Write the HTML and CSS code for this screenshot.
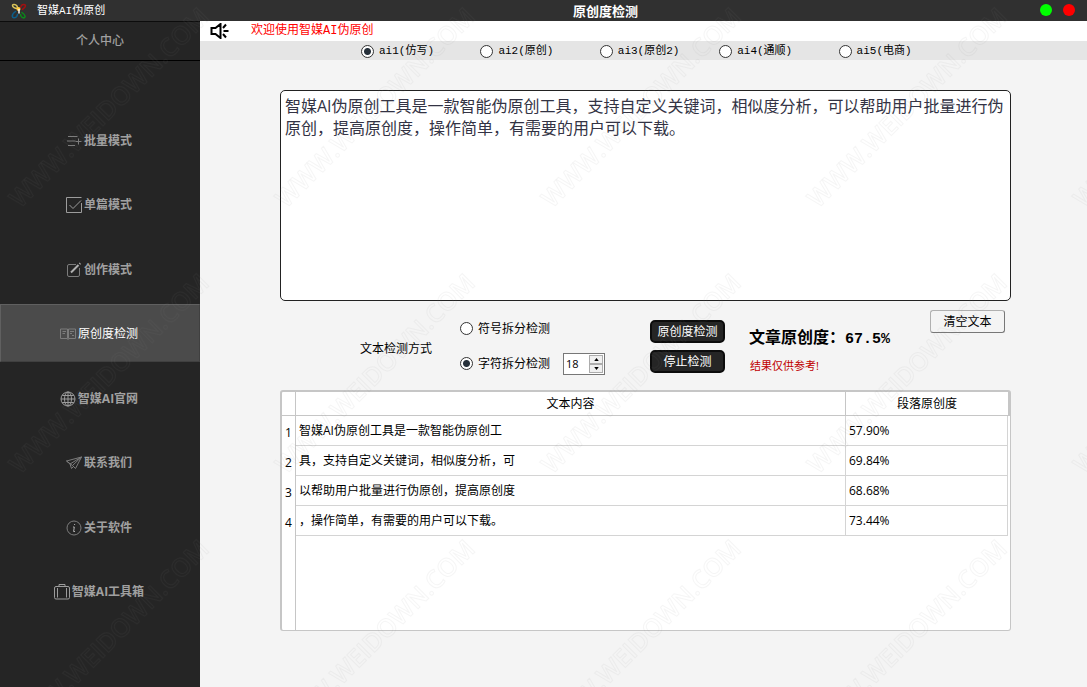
FILE: index.html
```html
<!DOCTYPE html>
<html lang="zh-CN">
<head>
<meta charset="utf-8">
<title>智媒AI伪原创</title>
<link rel="stylesheet" href="styles.css">
</head>
<body>
<div class="app">
  <header class="titlebar">
    <div class="brand">
      <svg class="logo" viewBox="0 0 16 16" fill="none" stroke-width="1.5" stroke-linecap="round" aria-hidden="true">
        <path d="M6 5.500C4 5.500 1.500 4 1.500 2.500s3-1.500 4.500.5l.5 1.500" stroke="#d9c45a"/>
        <path d="M9.500 4.500l1-2C11.500 1 14.500 1 14.500 2.800S12.500 5 11.500 6.500" stroke="#a01010"/>
        <path d="M11 9.500C12.500 10.500 14.500 12 14 13.800s-3 1.200-4-.8l-.5-1.500" stroke="#0a8a1a"/>
        <path d="M4.500 8.500C3 9.500 1 11 1.300 13.300s3.500 1.500 4.500 0L6.500 11.500" stroke="#0c5f8c"/>
        <circle cx="7.500" cy="6" r="2" fill="#ffc93c" stroke="none"/>
        <path d="M8 6.500v3.500" stroke="#f4f4f4"/>
      </svg>
      <span>智媒AI伪原创</span>
    </div>
    <h1 class="title">原创度检测</h1>
    <div class="window-buttons">
      <button type="button" class="dot dot-green" aria-label="最小化"></button>
      <button type="button" class="dot dot-red" aria-label="关闭"></button>
    </div>
  </header>

  <div class="body">
    <aside class="sidebar">
      <a class="profile" href="#">个人中心</a>
      <nav class="nav">
        <a class="nav-item" href="#">
          <svg class="icon" viewBox="0 0 16 16"><path d="M2 3.500h9.500M1 8h8.500M2 12.500h7M9.500 8.500h6M12.500 5.500v6"/></svg>批量模式</a>
        <a class="nav-item" href="#">
          <svg class="icon icon-bright" viewBox="0 0 16 16"><path d="M15.500 6v9.500H.5V.5h15M3.500 8l3.500 3.500 8-8"/></svg>单篇模式</a>
        <a class="nav-item" href="#">
          <svg class="icon" viewBox="0 0 16 16"><path d="M10 2.500H3a1.500 1.500 0 0 0-1.500 1.500v9A1.500 1.500 0 0 0 3 14.500h9a1.500 1.500 0 0 0 1.500-1.500V6"/><path class="pen" d="M5 10.500L12.500 3M13.500 2l.8-.8"/></svg>创作模式</a>
        <a class="nav-item nav-active" href="#" aria-current="page">
          <svg class="icon" viewBox="0 0 16 16"><path d="M.5 3h7v9.500h-7zM8.500 3h7v9.500h-7zM2.500 5.500H6M2.500 7.500H5M10 5.500h4M10 7.500h2M12 9.500h2M7.500 13.500h1"/></svg>原创度检测</a>
        <a class="nav-item" href="#">
          <svg class="icon icon-bright" viewBox="0 0 16 16"><path d="M8 1v14M1 8h14M2.200 4.500h11.600M2.200 11.500h11.600"/><circle cx="8" cy="8" r="7"/><ellipse cx="8" cy="8" rx="3.500" ry="7"/></svg>智媒AI官网</a>
        <a class="nav-item" href="#">
          <svg class="icon" viewBox="0 0 16 16"><path d="M.5 6L15.500 2l-6 11.500-3-3zM.5 6l3.500 3L15.500 2 6.500 10.500M4 9l1.500 4.500 2-2"/></svg>联系我们</a>
        <a class="nav-item" href="#">
          <svg class="icon" viewBox="0 0 16 16"><circle cx="8" cy="8" r="7"/><path class="letter" d="M8.600 4v1M7 7h1.300L7.600 11.500H9"/></svg>关于软件</a>
        <a class="nav-item" href="#">
          <svg class="icon icon-bright" viewBox="0 0 16 16"><rect x=".5" y="2.500" width="15" height="12.500" rx="1.500"/><path d="M5 2.500v-2h6v2M3.500 4v9.500M12.500 4v9.500"/></svg>智媒AI工具箱</a>
      </nav>
    </aside>

    <main class="main">
      <div class="notice">
        <svg class="speaker" viewBox="0 0 18 16" aria-hidden="true"><path d="M1 5h4l5-4v14l-5-4H1zM12.500 5l3-3.500M13 8h5M12.500 11l3 3.500"/></svg>
        <span>欢迎使用智媒AI伪原创</span>
      </div>
      <div class="modes" role="radiogroup" aria-label="模式">
        <label class="mode"><input class="radio" type="radio" name="mode" checked>ai1(仿写)</label>
        <label class="mode"><input class="radio" type="radio" name="mode">ai2(原创)</label>
        <label class="mode"><input class="radio" type="radio" name="mode">ai3(原创2)</label>
        <label class="mode"><input class="radio" type="radio" name="mode">ai4(通顺)</label>
        <label class="mode"><input class="radio" type="radio" name="mode">ai5(电商)</label>
      </div>

      <div class="content">
        <textarea class="editor" aria-label="文本" spellcheck="false">智媒AI伪原创工具是一款智能伪原创工具，支持自定义关键词，相似度分析，可以帮助用户批量进行伪原创，提高原创度，操作简单，有需要的用户可以下载。</textarea>

        <div class="controls">
          <span class="method-title" id="method">文本检测方式</span>
          <div class="methods" role="radiogroup" aria-labelledby="method">
            <label class="method"><input class="radio" type="radio" name="method">符号拆分检测</label>
            <div class="method-row">
              <label class="method"><input class="radio" type="radio" name="method" checked>字符拆分检测</label>
              <div class="spin">
                <input class="spin-input" type="number" value="18" aria-label="字符数">
                <div class="spin-buttons">
                  <button type="button" class="spin-button" aria-label="增加"><svg class="arrow" viewBox="0 0 6 4"><path d="M0 4l3-4 3 4z"/></svg></button>
                  <button type="button" class="spin-button" aria-label="减少"><svg class="arrow" viewBox="0 0 6 4"><path d="M0 0l3 4 3-4z"/></svg></button>
                </div>
              </div>
            </div>
          </div>
          <div class="actions">
            <button type="button" class="button button-dark">原创度检测</button>
            <button type="button" class="button button-dark">停止检测</button>
          </div>
          <div class="result">
            <strong class="score">文章原创度：<span class="score-value">67.5%</span></strong>
            <span class="hint">结果仅供参考!</span>
          </div>
          <button type="button" class="button button-clear">清空文本</button>
        </div>

        <div class="panel">
          <table class="table">
            <colgroup><col class="col-index"><col><col class="col-score"></colgroup>
            <thead>
              <tr><td class="corner"></td><th scope="col">文本内容</th><th scope="col">段落原创度</th></tr>
            </thead>
            <tbody>
              <tr><th scope="row">1</th><td>智媒AI伪原创工具是一款智能伪原创工</td><td>57.90%</td></tr>
              <tr><th scope="row">2</th><td>具，支持自定义关键词，相似度分析，可</td><td>69.84%</td></tr>
              <tr><th scope="row">3</th><td>以帮助用户批量进行伪原创，提高原创度</td><td>68.68%</td></tr>
              <tr><th scope="row">4</th><td>，操作简单，有需要的用户可以下载。</td><td>73.44%</td></tr>
            </tbody>
          </table>
          <div class="gutter"></div>
        </div>
      </div>
    </main>
  </div>

  <svg class="watermark" aria-hidden="true">
    <defs>
      <pattern id="mark" width="266" height="266" patternUnits="userSpaceOnUse">
        <text class="mark-text" transform="translate(20 209) rotate(-45)">WWW.WEIDOWN.COM</text>
      </pattern>
    </defs>
    <rect width="100%" height="100%" fill="url(#mark)"/>
  </svg>
</div>
</body>
</html>
```
FILE: styles.css
```css
* {
  box-sizing: border-box;
}

body {
  margin: 0;
  font: 12px/20px "Open Sans", "Noto Sans CJK SC", sans-serif;
  color: #000;
  background: #f4f4f4;
}

button,
input,
textarea {
  margin: 0;
  font: inherit;
  color: inherit;
}

a {
  color: inherit;
  text-decoration: none;
}

.app {
  position: relative;
  display: flex;
  flex-direction: column;
  min-height: 100vh;
}

/* Title bar */

.titlebar {
  display: grid;
  grid-template-columns: 200px 1fr 76px;
  align-items: center;
  height: 21px;
  background: #303030;
  color: #fff;
}

.brand {
  display: flex;
  align-items: center;
  gap: 10px;
  padding-left: 11px;
  font-family: "Liberation Mono", "Noto Sans CJK SC", monospace;
  font-size: 11px;
}

.logo {
  width: 16px;
  height: 16px;
}

.title {
  margin: 0;
  font-size: 13px;
  font-weight: 700;
  line-height: 20px;
  text-align: center;
}

.window-buttons {
  display: flex;
  justify-content: flex-end;
  gap: 11px;
  padding: 0 12px 2px 0;
}

.dot {
  width: 12px;
  height: 12px;
  padding: 0;
  border: 0;
  border-radius: 50%;
}

.dot-green {
  background: #0f0;
}

.dot-red {
  background: #f00;
}

/* Sidebar */

.body {
  display: flex;
  flex: 1;
}

.sidebar {
  display: flex;
  flex-direction: column;
  flex: none;
  width: 200px;
  background: #252525;
  color: #a0a0a0;
}

.profile {
  height: 40px;
  border-top: 1px solid #0c0c0c;
  border-bottom: 1px solid #000;
  font-weight: 500;
  line-height: 38px;
  text-align: center;
}

.nav {
  display: flex;
  flex: 1;
  flex-direction: column;
  justify-content: space-between;
  padding: 50px 0 67px;
}

.nav-item {
  display: flex;
  align-items: center;
  justify-content: center;
  gap: 2px;
  height: 58px;
  padding: 2px 2px 0 0;
  font-weight: 700;
}

.nav-active {
  border: 1px solid;
  border-color: #606060 #404040 #404040 #606060;
  background: #4b4b4b;
  color: #fff;
  font-weight: 400;
}

.icon {
  width: 16px;
  height: 16px;
  fill: none;
  stroke: #7c7c7c;
  stroke-width: 1;
}

.icon-bright {
  stroke: #9c9c9c;
}

.pen,
.letter {
  stroke: #b0b0b0;
  stroke-width: 2;
}

.letter {
  stroke-width: 1;
}

/* Main column */

.main {
  display: flex;
  flex: 1;
  flex-direction: column;
  min-width: 0;
}

.notice {
  display: flex;
  align-items: center;
  gap: 22px;
  height: 20px;
  padding-left: 10px;
  background: #fff;
  color: #f00;
  font-family: "Liberation Mono", "Noto Sans CJK SC", monospace;
}

.speaker {
  width: 19px;
  height: 16px;
  fill: none;
  stroke: #000;
  stroke-width: 2;
}

.modes {
  display: grid;
  grid-template-columns: repeat(5, 1fr);
  height: 19px;
  padding: 0 129px 0 161px;
  background: #e5e5e5;
  font-family: "Liberation Mono", "Noto Sans CJK SC", monospace;
  font-size: 11px;
}

.mode,
.method {
  display: flex;
  align-items: center;
  gap: 5px;
  white-space: nowrap;
}

.radio {
  flex: none;
  appearance: none;
  width: 13px;
  height: 13px;
  border: 1px solid #333;
  border-radius: 50%;
  background: #fff;
}

.radio:checked {
  background: radial-gradient(circle, #26303a 3px, #fff 4px);
}

.content {
  display: flex;
  flex: 1;
  flex-direction: column;
  padding: 30px 76px 56px 80px;
}

.editor {
  width: 100%;
  height: 211px;
  padding: 4px 4px;
  border: 1px solid #222;
  border-radius: 5px;
  outline: 0;
  background: #fff;
  color: #333344;
  font-size: 16px;
  line-height: 22px;
  resize: none;
}

/* Controls */

.controls {
  display: flex;
  align-items: flex-start;
  height: 89px;
  padding: 9px 6px 0 80px;
  white-space: nowrap;
}

.method-title {
  margin: 29px 28px 0 0;
}

.methods {
  display: grid;
  gap: 12px;
  margin: 7px 45px 0 0;
}

.method,
.method-row {
  height: 23px;
}

.method-row {
  display: flex;
  align-items: center;
  gap: 13px;
}

.spin {
  display: flex;
  width: 42px;
  height: 22px;
  padding: 1px;
  border: 1px solid #777;
  background: #fff;
}

.spin-input {
  flex: 1;
  width: 0;
  min-width: 0;
  padding: 0 0 0 1px;
  border: 0;
  outline: 0;
  background: none;
  font-size: 11px;
  appearance: textfield;
}

.spin-input::-webkit-inner-spin-button {
  appearance: none;
}

.spin-buttons {
  display: grid;
  grid-template-rows: 1fr 1fr;
  width: 14px;
}

.spin-button {
  display: grid;
  place-items: center;
  min-height: 0;
  padding: 0;
  border: 1px solid #acacac;
  background: #f0f0f0;
}

.arrow {
  width: 5px;
  height: 3px;
}

.actions {
  display: grid;
  gap: 7px;
  margin: 10px 24px 0 0;
}

.button {
  width: 75px;
  height: 23px;
  padding: 0;
  border-radius: 3px;
  line-height: 20px;
}

.button-dark {
  border: 2px solid #0c0c0c;
  border-radius: 5px;
  background: #252525;
  color: #fff;
}

.button-clear {
  margin-left: auto;
  border: 1px solid;
  border-color: #b0b0b0 #777 #777 #b0b0b0;
  background: #f4f4f4;
}

.result {
  display: grid;
  gap: 6px;
  margin-top: 17px;
}

.score {
  font-size: 16px;
}

.score-value {
  font-family: "Liberation Mono", monospace;
  font-size: 15px;
}

.hint {
  padding-left: 1px;
  color: #c00000;
  font-size: 11px;
}

/* Results */

.panel {
  display: flex;
  flex: 1;
  flex-direction: column;
  border: 1px solid #c6c6c6;
  border-width: 2px 1px 1px 2px;
  border-radius: 3px;
  background: #fff;
}

.table {
  width: 100%;
  border-collapse: separate;
  border-spacing: 0;
  table-layout: fixed;
  border-right: 2px solid #fff;
}

.col-index {
  width: 14px;
}

.col-score {
  width: 162px;
}

.table th,
.table td {
  height: 30px;
  padding: 0 3px;
  border: 0 solid #d4d4d4;
  border-width: 0 1px 1px 0;
  font-weight: 400;
  text-align: left;
}

.table thead th,
.table .corner {
  height: 24px;
  border-color: #c6c6c6;
  text-align: center;
}

.table thead th:last-child {
  border-right: 0;
  box-shadow: 2px 0 #c6c6c6;
}

.table tbody th {
  padding: 3px 0 0;
  border-bottom: 0;
  border-color: #c6c6c6;
  text-align: center;
}

.gutter {
  flex: 1;
  width: 14px;
  border-right: 1px solid #c6c6c6;
}

/* Watermark */

.watermark {
  position: absolute;
  inset: 0;
  width: 100%;
  height: 100%;
  pointer-events: none;
}

.mark-text {
  fill: none;
  stroke: #808080;
  stroke-opacity: 0.08;
  stroke-width: 1;
  font: 600 25px "Open Sans", sans-serif;
}
```
